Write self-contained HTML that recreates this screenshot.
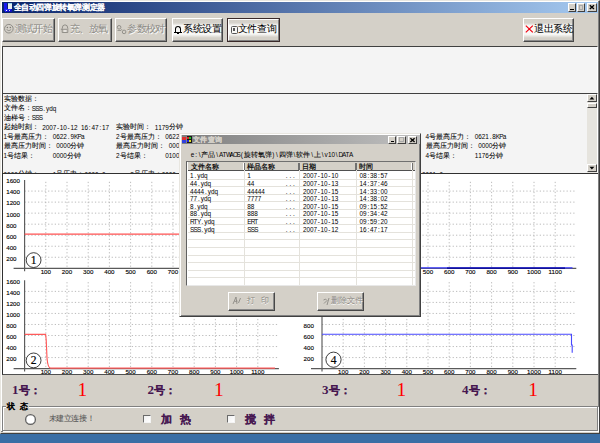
<!DOCTYPE html><html><head><meta charset="utf-8"><style>
*{margin:0;padding:0;box-sizing:border-box}
html,body{width:600px;height:443px;overflow:hidden;background:#3a6ea5;position:relative;font-family:"Liberation Sans",sans-serif}
div{position:absolute}
.st{white-space:nowrap;line-height:9.4px;height:9.4px}
.st i{display:inline-block;position:relative;top:0.4px;font-style:normal;width:3.516px;text-align:center;font-family:"Liberation Sans",sans-serif;font-size:6.4px}.st .k{font-size:7.03px;letter-spacing:0.03px;-webkit-text-stroke:0.08px}
.win{left:0;top:0;width:600px;height:433.6px;background:#d4d0c8;border-top:1px solid #e8e6e0;border-left:1px solid #e8e6e0;border-right:1px solid #404040;border-bottom:1px solid #404040}
.btn{background:#d4d0c8;border-top:1px solid #fff;border-left:1px solid #fff;border-right:1px solid #484848;border-bottom:1px solid #484848;box-shadow:inset -1px -1px 0 #8a8a8a}
.btxt{white-space:nowrap;font-size:9.4px;line-height:10px;-webkit-text-stroke:0.05px}
</style></head><body><div class="win"></div>
<div style="left:1px;top:1px;width:597px;height:1px;background:#fff"></div>
<div style="left:1px;top:1px;width:1px;height:431px;background:#fff"></div>
<div style="left:598px;top:1px;width:1px;height:431px;background:#808080"></div>
<div style="left:1px;top:431px;width:598px;height:1px;background:#808080"></div>
<div style="left:2px;top:2px;width:596px;height:10.6px;background:linear-gradient(90deg,#0a246a,#a6caf0)"></div>
<div style="left:4.2px;top:3.2px;width:2.4px;height:8.3px;background:#1818f0"></div>
<div style="left:7.6px;top:3.2px;width:4.4px;height:7px;background:linear-gradient(#90d8f0 0 18%,#e8ecec 18%)"></div>
<div style="left:4.5px;top:8.5px;width:7px;height:3px;background:linear-gradient(160deg,#2a2aff 0 50%,#1010c0 50%)"></div>
<div style="left:5.6px;top:10px;width:1.4px;height:1.4px;background:#fff"></div><div style="left:9px;top:10px;width:1.4px;height:1.4px;background:#cde"></div>
<div class="btxt" style="left:13.5px;top:2.5px;color:#fff;font-weight:bold;font-size:7.6px;line-height:10.3px;letter-spacing:-0.4px">全自动四弹旋转氧弹测定器</div>
<div style="left:567.5px;top:3.3px;width:8.3px;height:8.4px;background:#d4d0c8;border-top:1px solid #fff;border-left:1px solid #fff;border-right:1px solid #404040;border-bottom:1px solid #404040"></div>
<div style="left:570.0px;top:8.5px;width:3.5px;height:1.2px;background:#000"></div>
<div style="left:576.5px;top:3.3px;width:8.5px;height:8.4px;background:#d4d0c8;border-top:1px solid #fff;border-left:1px solid #fff;border-right:1px solid #404040;border-bottom:1px solid #404040"></div>
<div style="left:578.5px;top:5.1px;width:4.5px;height:4.5px;border:0.8px solid #a8a8a8;border-top-width:1.2px"></div>
<div style="left:586.5px;top:3.3px;width:10px;height:8.4px;background:#d4d0c8;border-top:1px solid #fff;border-left:1px solid #fff;border-right:1px solid #404040;border-bottom:1px solid #404040"></div>
<svg style="position:absolute;left:586.5px;top:3.3px" width="10" height="8.4" viewBox="0 0 10 8.4"><path d="M2.80 2.30L7.00 6.10M7.00 2.30L2.80 6.10" stroke="#000" stroke-width="1.3"/></svg>
<div class="btn" style="left:2px;top:18.2px;width:53px;height:23.500000000000004px"></div>
<div class="btxt" style="left:14.6px;top:24.4px;color:#8e8c86;font-size:10.1px;letter-spacing:-0.6px;text-shadow:0.6px 0.6px 0 #fff">测试开始</div>
<svg style="position:absolute;left:3px;top:23px" width="12" height="12" viewBox="0 0 12 12"><circle cx="5.85" cy="5.7" r="4.3" fill="none" stroke="#8e8c86" stroke-width="1"/><circle cx="4.4" cy="4.4" r="0.75" fill="#7a7872"/><circle cx="7.3" cy="4.4" r="0.75" fill="#7a7872"/><path d="M3.6 6.6Q5.85 8.8 8.1 6.6" fill="none" stroke="#8e8c86" stroke-width="0.9"/></svg>
<div class="btn" style="left:58px;top:18.2px;width:53.5px;height:23.500000000000004px"></div>
<div class="btxt" style="left:69.5px;top:24.4px;color:#8e8c86;font-size:10.1px;letter-spacing:-0.5px;text-shadow:0.6px 0.6px 0 #fff">充、放氧</div>
<svg style="position:absolute;left:60px;top:23px" width="10" height="12" viewBox="0 0 10 12"><path d="M2.2 9.5L2.2 5.5Q2.2 1.8 5 1.8Q7.8 1.8 7.8 5.5L7.8 9.5Z" fill="none" stroke="#8e8c86" stroke-width="0.95"/><path d="M0.8 6.3L7 6.3" stroke="#8e8c86" stroke-width="0.9"/><path d="M4 8L6 8" stroke="#fff" stroke-width="0.8"/></svg>
<div class="btn" style="left:115px;top:18.2px;width:52px;height:23.500000000000004px"></div>
<div class="btxt" style="left:127.3px;top:24.4px;color:#8e8c86;font-size:10.1px;letter-spacing:-0.6px;text-shadow:0.6px 0.6px 0 #fff">参数校对</div>
<svg style="position:absolute;left:116px;top:24px" width="12" height="11" viewBox="0 0 12 11"><circle cx="3.1" cy="3.3" r="1.8" fill="none" stroke="#8e8c86" stroke-width="0.95"/><circle cx="8.1" cy="7.9" r="1.8" fill="none" stroke="#8e8c86" stroke-width="0.95"/><path d="M1.5 6.5L5 6.5L6 5" fill="none" stroke="#8e8c86" stroke-width="0.8"/></svg>
<div class="btn" style="left:171.7px;top:18.2px;width:51.10000000000002px;height:23.500000000000004px;background:linear-gradient(#d4d0c8 0%,#d6d3cc 18%,#f8f8f6 30%,#f8f8f6 70%,#d4d0c8 86%)"></div>
<div class="btxt" style="left:183.3px;top:24.4px;color:#000;font-size:10.1px;letter-spacing:-0.45px">系统设置</div>
<div style="left:175px;top:26px;width:6px;height:6px;border:1.3px solid #000;border-bottom:none;border-radius:3px 3px 0 0"></div><div style="left:174px;top:31.5px;width:8px;height:1.3px;background:#000"></div><div style="left:177.2px;top:33px;width:1.6px;height:1.2px;background:#000"></div>
<div style="left:227px;top:18.2px;width:52.80000000000001px;height:23.500000000000004px;border:1px solid #3a2a2a;background:#d4d0c8"></div>
<div style="left:228px;top:19.2px;width:50.80000000000001px;height:21.500000000000004px;border-top:1px solid #fff;border-left:1px solid #fff;border-right:1px solid #808080;border-bottom:1px solid #808080;background:linear-gradient(#d4d0c8 0%,#d6d3cc 14%,#f8f8f6 28%,#f8f8f6 70%,#d4d0c8 86%)"></div>
<div class="btxt" style="left:237.6px;top:24.4px;color:#000;font-size:10.1px;letter-spacing:-0.3px">文件查询</div>
<div style="left:231px;top:26px;width:6.5px;height:7.5px;border:1px solid #555;border-radius:1.5px"></div><div style="left:233.2px;top:28.3px;width:2px;height:3px;background:#555"></div>
<div class="btn" style="left:522.5px;top:18.2px;width:51.799999999999955px;height:23.500000000000004px;background:linear-gradient(#d4d0c8 0%,#d6d3cc 18%,#f8f8f6 30%,#f8f8f6 70%,#d4d0c8 86%)"></div>
<div class="btxt" style="left:534px;top:24.4px;color:#000;font-size:10.1px;letter-spacing:-0.45px">退出系统</div>
<svg style="position:absolute;left:524.8px;top:25px" width="8.6" height="8" viewBox="0 0 8.6 8"><path d="M0.8 0.6L7.8 7.4M7.8 0.6L0.8 7.4" stroke="#f00010" stroke-width="1.15"/></svg>
<div style="left:2px;top:45.8px;width:595.5px;height:47.5px;background:#f4f4f4;border-top:1px solid #404040;border-left:1px solid #404040;border-right:1px solid #fff"></div>
<div style="left:2px;top:92.8px;width:595.5px;height:80px;background:#f4f4f4;border-top:1px solid #404040;border-left:1px solid #404040;border-right:1px solid #fff;overflow:hidden"></div>
<div class="st " style="left:3.6px;top:91.0px;color:#000;"><span class="k">实验数据：</span></div>
<div class="st " style="left:3.6px;top:100.42px;color:#000;"><span class="k">文件名：</span><i>S</i><i>S</i><i>S</i><i>.</i><i>y</i><i>d</i><i>q</i></div>
<div class="st " style="left:3.6px;top:109.84px;color:#000;"><span class="k">油样号：</span><i>S</i><i>S</i><i>S</i></div>
<div class="st " style="left:3.6px;top:119.25999999999999px;color:#000;"><span class="k">起始时刻：</span></div>
<div class="st " style="left:42.276px;top:119.25999999999999px;color:#000;"><i>2</i><i>0</i><i>0</i><i>7</i><i>-</i><i>1</i><i>0</i><i>-</i><i>1</i><i>2</i><i>&#160;</i><i>1</i><i>6</i><i>:</i><i>4</i><i>7</i><i>:</i><i>1</i><i>7</i></div>
<div class="st " style="left:116.112px;top:119.25999999999999px;color:#000;"><span class="k">实验时间：</span></div>
<div class="st " style="left:154.78799999999998px;top:119.25999999999999px;color:#000;"><i>1</i><i>1</i><i>7</i><i>9</i><span class="k">分钟</span></div>
<div class="st " style="left:3.6px;top:128.68px;color:#000;"><i>1</i><span class="k">号最高压力：</span></div>
<div class="st " style="left:52.824000000000005px;top:128.68px;color:#000;"><i>0</i><i>6</i><i>2</i><i>2</i><i>.</i><i>9</i><i>K</i><i>P</i><i>a</i></div>
<div class="st " style="left:116.112px;top:128.68px;color:#000;"><i>2</i><span class="k">号最高压力：</span></div>
<div class="st " style="left:165.33599999999998px;top:128.68px;color:#000;"><i>0</i><i>6</i><i>2</i><i>2</i><i>.</i><i>9</i><i>K</i><i>P</i><i>a</i></div>
<div class="st " style="left:425.52000000000004px;top:128.68px;color:#000;"><i>4</i><span class="k">号最高压力：</span></div>
<div class="st " style="left:474.744px;top:128.68px;color:#000;"><i>0</i><i>6</i><i>2</i><i>1</i><i>.</i><i>8</i><i>K</i><i>P</i><i>a</i></div>
<div class="st " style="left:3.6px;top:138.1px;color:#000;"><span class="k">最高压力时间：</span></div>
<div class="st " style="left:56.34px;top:138.1px;color:#000;"><i>0</i><i>0</i><i>0</i><i>0</i><span class="k">分钟</span></div>
<div class="st " style="left:116.112px;top:138.1px;color:#000;"><span class="k">最高压力时间：</span></div>
<div class="st " style="left:168.852px;top:138.1px;color:#000;"><i>0</i><i>0</i><i>0</i><i>0</i><span class="k">分钟</span></div>
<div class="st " style="left:425.52000000000004px;top:138.1px;color:#000;"><span class="k">最高压力时间：</span></div>
<div class="st " style="left:478.26000000000005px;top:138.1px;color:#000;"><i>0</i><i>0</i><i>0</i><i>0</i><span class="k">分钟</span></div>
<div class="st " style="left:3.6px;top:147.51999999999998px;color:#000;"><i>1</i><span class="k">号结果：</span></div>
<div class="st " style="left:52.824000000000005px;top:147.51999999999998px;color:#000;"><i>0</i><i>0</i><i>0</i><i>0</i><span class="k">分钟</span></div>
<div class="st " style="left:116.112px;top:147.51999999999998px;color:#000;"><i>2</i><span class="k">号结果：</span></div>
<div class="st " style="left:165.33599999999998px;top:147.51999999999998px;color:#000;"><i>0</i><i>1</i><i>0</i><i>0</i><span class="k">分钟</span></div>
<div class="st " style="left:425.52000000000004px;top:147.51999999999998px;color:#000;"><i>4</i><span class="k">号结果：</span></div>
<div class="st " style="left:474.744px;top:147.51999999999998px;color:#000;"><i>1</i><i>1</i><i>7</i><i>6</i><span class="k">分钟</span></div>
<div style="left:3px;top:165px;width:583px;height:7.5px;overflow:hidden">
<div class="st " style="left:0.6px;top:1.3600000000000136px;color:#000;"><i>0</i><i>0</i><i>0</i><i>0</i><span class="k">分钟：</span></div>
<div class="st " style="left:49.824000000000005px;top:1.3600000000000136px;color:#000;"><i>1</i><span class="k">号压力：</span><i>0</i><i>0</i><i>0</i><i>0</i><i>.</i><i>0</i></div>
<div class="st " style="left:127.17599999999999px;top:1.3600000000000136px;color:#000;"><i>2</i><span class="k">号压力：</span><i>0</i><i>0</i><i>0</i><i>0</i><i>.</i><i>0</i></div>
<div class="st " style="left:204.528px;top:1.3600000000000136px;color:#000;"><i>3</i><span class="k">号压力：</span><i>0</i><i>0</i><i>0</i><i>0</i><i>.</i><i>0</i></div>
<div class="st " style="left:419.004px;top:1.3600000000000136px;color:#000;"><i>0</i><i>0</i><i>0</i><i>1</i><i>.</i><i>0</i></div>
</div>
<div style="left:587px;top:94px;width:10px;height:78.5px;background:#e6e4de"></div>
<div style="left:587px;top:94.2px;width:9.8px;height:8px;background:#d4d0c8;border-top:1px solid #fff;border-left:1px solid #fff;border-right:1px solid #404040;border-bottom:1px solid #404040"></div>
<svg style="position:absolute;left:587px;top:94.2px" width="9.8" height="8" viewBox="0 0 10 8"><path d="M2.5 5.5L5 2.8L7.5 5.5Z" fill="#000"/></svg>
<div style="left:587px;top:102.5px;width:9.8px;height:5px;background:#d4d0c8;border-top:1px solid #fff;border-left:1px solid #fff;border-right:1px solid #404040;border-bottom:1px solid #404040"></div>
<div style="left:587px;top:164.2px;width:9.8px;height:8px;background:#d4d0c8;border-top:1px solid #fff;border-left:1px solid #fff;border-right:1px solid #404040;border-bottom:1px solid #404040"></div>
<svg style="position:absolute;left:587px;top:164.2px" width="9.8" height="8" viewBox="0 0 10 8"><path d="M2.5 2.8L5 5.5L7.5 2.8Z" fill="#000"/></svg>
<div style="left:2px;top:172.5px;width:596px;height:202.5px;background:#fff;border-top:1.3px solid #303030;border-left:1px solid #303030;border-bottom:1px solid #505050"></div>
<svg style="position:absolute;left:0;top:0" width="600" height="443" viewBox="0 0 600 443"><style>.g{stroke:#ababab;stroke-width:0.8;stroke-dasharray:1.25 2.1}.ax{stroke:#5a5a5a;stroke-width:1.15}.yl{font-family:"Liberation Sans";font-size:6.2px;text-anchor:start;fill:#000;stroke:#000;stroke-width:0.12px}.xl{font-family:"Liberation Sans";font-size:6.2px;text-anchor:middle;fill:#000;stroke:#000;stroke-width:0.12px}.cl{font-family:"Liberation Serif";font-size:11.5px;text-anchor:middle;fill:#000;stroke:#000;stroke-width:0.2px}</style><line x1="24.6" y1="257.27" x2="278.90" y2="257.27" class="g"/><line x1="24.6" y1="246.24" x2="278.90" y2="246.24" class="g"/><line x1="24.6" y1="235.21" x2="278.90" y2="235.21" class="g"/><line x1="24.6" y1="224.18" x2="278.90" y2="224.18" class="g"/><line x1="24.6" y1="213.15" x2="278.90" y2="213.15" class="g"/><line x1="24.6" y1="202.12" x2="278.90" y2="202.12" class="g"/><line x1="24.6" y1="191.09" x2="278.90" y2="191.09" class="g"/><line x1="45.80" y1="181.80" x2="45.80" y2="268.30" class="g"/><line x1="67.00" y1="181.80" x2="67.00" y2="268.30" class="g"/><line x1="88.20" y1="181.80" x2="88.20" y2="268.30" class="g"/><line x1="109.40" y1="181.80" x2="109.40" y2="268.30" class="g"/><line x1="130.60" y1="181.80" x2="130.60" y2="268.30" class="g"/><line x1="151.80" y1="181.80" x2="151.80" y2="268.30" class="g"/><line x1="173.00" y1="181.80" x2="173.00" y2="268.30" class="g"/><line x1="194.20" y1="181.80" x2="194.20" y2="268.30" class="g"/><line x1="215.40" y1="181.80" x2="215.40" y2="268.30" class="g"/><line x1="236.60" y1="181.80" x2="236.60" y2="268.30" class="g"/><line x1="257.80" y1="181.80" x2="257.80" y2="268.30" class="g"/><line x1="24.6" y1="179.90" x2="24.6" y2="271.30" class="ax"/><line x1="13.60" y1="268.3" x2="278.90" y2="268.3" class="ax"/><text x="6.20" y="260.62" class="yl">200</text><text x="6.20" y="249.59" class="yl">400</text><text x="6.20" y="238.56" class="yl">600</text><text x="6.20" y="227.53" class="yl">800</text><text x="6.20" y="216.50" class="yl">1000</text><text x="6.20" y="205.47" class="yl">1200</text><text x="6.20" y="194.44" class="yl">1400</text><text x="6.20" y="183.41" class="yl">1600</text><text x="45.80" y="273.90" class="xl">100</text><text x="67.00" y="273.90" class="xl">200</text><text x="88.20" y="273.90" class="xl">300</text><text x="109.40" y="273.90" class="xl">400</text><text x="130.60" y="273.90" class="xl">500</text><text x="151.80" y="273.90" class="xl">600</text><text x="173.00" y="273.90" class="xl">700</text><text x="194.20" y="273.90" class="xl">800</text><text x="215.40" y="273.90" class="xl">900</text><text x="236.60" y="273.90" class="xl">1000</text><text x="257.80" y="273.90" class="xl">1100</text><circle cx="33.60" cy="260.10" r="7.4" fill="#fff" stroke="#000" stroke-width="0.75"/><text x="33.60" y="264.00" class="cl">1</text><line x1="24.6" y1="357.57" x2="278.90" y2="357.57" class="g"/><line x1="24.6" y1="346.54" x2="278.90" y2="346.54" class="g"/><line x1="24.6" y1="335.51" x2="278.90" y2="335.51" class="g"/><line x1="24.6" y1="324.48" x2="278.90" y2="324.48" class="g"/><line x1="24.6" y1="313.45" x2="278.90" y2="313.45" class="g"/><line x1="24.6" y1="302.42" x2="278.90" y2="302.42" class="g"/><line x1="24.6" y1="291.39" x2="278.90" y2="291.39" class="g"/><line x1="45.80" y1="282.10" x2="45.80" y2="368.60" class="g"/><line x1="67.00" y1="282.10" x2="67.00" y2="368.60" class="g"/><line x1="88.20" y1="282.10" x2="88.20" y2="368.60" class="g"/><line x1="109.40" y1="282.10" x2="109.40" y2="368.60" class="g"/><line x1="130.60" y1="282.10" x2="130.60" y2="368.60" class="g"/><line x1="151.80" y1="282.10" x2="151.80" y2="368.60" class="g"/><line x1="173.00" y1="282.10" x2="173.00" y2="368.60" class="g"/><line x1="194.20" y1="282.10" x2="194.20" y2="368.60" class="g"/><line x1="215.40" y1="282.10" x2="215.40" y2="368.60" class="g"/><line x1="236.60" y1="282.10" x2="236.60" y2="368.60" class="g"/><line x1="257.80" y1="282.10" x2="257.80" y2="368.60" class="g"/><line x1="24.6" y1="280.20" x2="24.6" y2="371.60" class="ax"/><line x1="13.60" y1="368.6" x2="278.90" y2="368.6" class="ax"/><text x="6.20" y="360.92" class="yl">200</text><text x="6.20" y="349.89" class="yl">400</text><text x="6.20" y="338.86" class="yl">600</text><text x="6.20" y="327.83" class="yl">800</text><text x="6.20" y="316.80" class="yl">1000</text><text x="6.20" y="305.77" class="yl">1200</text><text x="6.20" y="294.74" class="yl">1400</text><text x="6.20" y="283.71" class="yl">1600</text><text x="45.80" y="374.20" class="xl">100</text><text x="67.00" y="374.20" class="xl">200</text><text x="88.20" y="374.20" class="xl">300</text><text x="109.40" y="374.20" class="xl">400</text><text x="130.60" y="374.20" class="xl">500</text><text x="151.80" y="374.20" class="xl">600</text><text x="173.00" y="374.20" class="xl">700</text><text x="194.20" y="374.20" class="xl">800</text><text x="215.40" y="374.20" class="xl">900</text><text x="236.60" y="374.20" class="xl">1000</text><text x="257.80" y="374.20" class="xl">1100</text><circle cx="33.60" cy="360.40" r="7.4" fill="#fff" stroke="#000" stroke-width="0.75"/><text x="33.60" y="364.30" class="cl">2</text><line x1="322" y1="257.27" x2="576.30" y2="257.27" class="g"/><line x1="322" y1="246.24" x2="576.30" y2="246.24" class="g"/><line x1="322" y1="235.21" x2="576.30" y2="235.21" class="g"/><line x1="322" y1="224.18" x2="576.30" y2="224.18" class="g"/><line x1="322" y1="213.15" x2="576.30" y2="213.15" class="g"/><line x1="322" y1="202.12" x2="576.30" y2="202.12" class="g"/><line x1="322" y1="191.09" x2="576.30" y2="191.09" class="g"/><line x1="343.20" y1="181.80" x2="343.20" y2="268.30" class="g"/><line x1="364.40" y1="181.80" x2="364.40" y2="268.30" class="g"/><line x1="385.60" y1="181.80" x2="385.60" y2="268.30" class="g"/><line x1="406.80" y1="181.80" x2="406.80" y2="268.30" class="g"/><line x1="428.00" y1="181.80" x2="428.00" y2="268.30" class="g"/><line x1="449.20" y1="181.80" x2="449.20" y2="268.30" class="g"/><line x1="470.40" y1="181.80" x2="470.40" y2="268.30" class="g"/><line x1="491.60" y1="181.80" x2="491.60" y2="268.30" class="g"/><line x1="512.80" y1="181.80" x2="512.80" y2="268.30" class="g"/><line x1="534.00" y1="181.80" x2="534.00" y2="268.30" class="g"/><line x1="555.20" y1="181.80" x2="555.20" y2="268.30" class="g"/><line x1="322" y1="179.90" x2="322" y2="271.30" class="ax"/><line x1="311.00" y1="268.3" x2="576.30" y2="268.3" class="ax"/><text x="303.60" y="260.62" class="yl">200</text><text x="303.60" y="249.59" class="yl">400</text><text x="303.60" y="238.56" class="yl">600</text><text x="303.60" y="227.53" class="yl">800</text><text x="303.60" y="216.50" class="yl">1000</text><text x="303.60" y="205.47" class="yl">1200</text><text x="303.60" y="194.44" class="yl">1400</text><text x="303.60" y="183.41" class="yl">1600</text><text x="343.20" y="273.90" class="xl">100</text><text x="364.40" y="273.90" class="xl">200</text><text x="385.60" y="273.90" class="xl">300</text><text x="406.80" y="273.90" class="xl">400</text><text x="428.00" y="273.90" class="xl">500</text><text x="449.20" y="273.90" class="xl">600</text><text x="470.40" y="273.90" class="xl">700</text><text x="491.60" y="273.90" class="xl">800</text><text x="512.80" y="273.90" class="xl">900</text><text x="534.00" y="273.90" class="xl">1000</text><text x="555.20" y="273.90" class="xl">1100</text><circle cx="331.00" cy="260.10" r="7.4" fill="#fff" stroke="#000" stroke-width="0.75"/><text x="331.00" y="264.00" class="cl">3</text><line x1="322" y1="357.57" x2="576.30" y2="357.57" class="g"/><line x1="322" y1="346.54" x2="576.30" y2="346.54" class="g"/><line x1="322" y1="335.51" x2="576.30" y2="335.51" class="g"/><line x1="322" y1="324.48" x2="576.30" y2="324.48" class="g"/><line x1="322" y1="313.45" x2="576.30" y2="313.45" class="g"/><line x1="322" y1="302.42" x2="576.30" y2="302.42" class="g"/><line x1="322" y1="291.39" x2="576.30" y2="291.39" class="g"/><line x1="343.20" y1="282.10" x2="343.20" y2="368.60" class="g"/><line x1="364.40" y1="282.10" x2="364.40" y2="368.60" class="g"/><line x1="385.60" y1="282.10" x2="385.60" y2="368.60" class="g"/><line x1="406.80" y1="282.10" x2="406.80" y2="368.60" class="g"/><line x1="428.00" y1="282.10" x2="428.00" y2="368.60" class="g"/><line x1="449.20" y1="282.10" x2="449.20" y2="368.60" class="g"/><line x1="470.40" y1="282.10" x2="470.40" y2="368.60" class="g"/><line x1="491.60" y1="282.10" x2="491.60" y2="368.60" class="g"/><line x1="512.80" y1="282.10" x2="512.80" y2="368.60" class="g"/><line x1="534.00" y1="282.10" x2="534.00" y2="368.60" class="g"/><line x1="555.20" y1="282.10" x2="555.20" y2="368.60" class="g"/><line x1="322" y1="280.20" x2="322" y2="371.60" class="ax"/><line x1="311.00" y1="368.6" x2="576.30" y2="368.6" class="ax"/><text x="303.60" y="360.92" class="yl">200</text><text x="303.60" y="349.89" class="yl">400</text><text x="303.60" y="338.86" class="yl">600</text><text x="303.60" y="327.83" class="yl">800</text><text x="303.60" y="316.80" class="yl">1000</text><text x="303.60" y="305.77" class="yl">1200</text><text x="303.60" y="294.74" class="yl">1400</text><text x="303.60" y="283.71" class="yl">1600</text><text x="343.20" y="374.20" class="xl">100</text><text x="364.40" y="374.20" class="xl">200</text><text x="385.60" y="374.20" class="xl">300</text><text x="406.80" y="374.20" class="xl">400</text><text x="428.00" y="374.20" class="xl">500</text><text x="449.20" y="374.20" class="xl">600</text><text x="470.40" y="374.20" class="xl">700</text><text x="491.60" y="374.20" class="xl">800</text><text x="512.80" y="374.20" class="xl">900</text><text x="534.00" y="374.20" class="xl">1000</text><text x="555.20" y="374.20" class="xl">1100</text><circle cx="333.50" cy="359.70" r="7.6" fill="#fff" stroke="#000" stroke-width="0.75"/><text x="333.50" y="363.60" class="cl">4</text><line x1="24.6" y1="234.00" x2="278" y2="234.00" stroke="#ff5050" stroke-width="1.25"/><path d="M24.6 334.30 L45.6 334.30 L46.2 340 L47 358 C47.6 365 48.5 368 50.5 368.1 L275 368.1" fill="none" stroke="#ff5a5a" stroke-width="1.15"/><line x1="322" y1="267.8" x2="572.5" y2="267.8" stroke="#3838ff" stroke-width="1.3"/><line x1="447" y1="268.1" x2="565" y2="268.1" stroke="#000090" stroke-width="1.4"/><path d="M322 334.30 L571.5 334.30 L571.5 345 L572.2 345 L572.2 352.7" fill="none" stroke="#4848ff" stroke-width="1.1"/></svg>
<div style="left:12px;top:381.5px;white-space:nowrap;color:#461650;line-height:14px;height:14px"><span style="display:inline-block;width:6.6px;font-family:'Liberation Serif',serif;font-weight:bold;font-size:13px">1</span><span style="font-weight:bold;font-size:10.95px;-webkit-text-stroke:0.1px">号：</span></div>
<div style="left:77.5px;top:379.6px;color:#f00;font-family:'Liberation Serif',serif;font-size:19.5px;line-height:20px;white-space:nowrap">1</div>
<div style="left:147.5px;top:381.5px;white-space:nowrap;color:#461650;line-height:14px;height:14px"><span style="display:inline-block;width:6.6px;font-family:'Liberation Serif',serif;font-weight:bold;font-size:13px">2</span><span style="font-weight:bold;font-size:10.95px;-webkit-text-stroke:0.1px">号：</span></div>
<div style="left:214px;top:379.6px;color:#f00;font-family:'Liberation Serif',serif;font-size:19.5px;line-height:20px;white-space:nowrap">1</div>
<div style="left:322px;top:381.5px;white-space:nowrap;color:#461650;line-height:14px;height:14px"><span style="display:inline-block;width:6.6px;font-family:'Liberation Serif',serif;font-weight:bold;font-size:13px">3</span><span style="font-weight:bold;font-size:10.95px;-webkit-text-stroke:0.1px">号：</span></div>
<div style="left:396.5px;top:379.6px;color:#f00;font-family:'Liberation Serif',serif;font-size:19.5px;line-height:20px;white-space:nowrap">1</div>
<div style="left:462px;top:381.5px;white-space:nowrap;color:#461650;line-height:14px;height:14px"><span style="display:inline-block;width:6.6px;font-family:'Liberation Serif',serif;font-weight:bold;font-size:13px">4</span><span style="font-weight:bold;font-size:10.95px;-webkit-text-stroke:0.1px">号：</span></div>
<div style="left:528.3px;top:379.6px;color:#f00;font-family:'Liberation Serif',serif;font-size:19.5px;line-height:20px;white-space:nowrap">1</div>
<div style="left:2.3px;top:406.3px;width:595.5px;height:24.3px;border:1px solid #808080;box-shadow:inset 1px 1px 0 #fff,1px 1px 0 #fff"></div>
<div class="btxt" style="left:6.3px;top:401.3px;padding:0 1px 0 1.2px;background:#d4d0c8;font-weight:bold;font-size:8.3px;line-height:10px;color:#000;letter-spacing:4.3px">状<span style="letter-spacing:0">态</span></div>
<div style="left:25px;top:414.3px;width:11px;height:10.5px;border-radius:50%;background:#fff;border:1px solid #606060;box-shadow:inset 0 0 0 0.5px #999"></div>
<div class="btxt" style="left:48.5px;top:414px;color:#555;font-size:7.6px;line-height:10px;letter-spacing:-0.4px">未建立连接！</div>
<div style="left:143px;top:415.3px;width:8px;height:8.2px;background:linear-gradient(135deg,#f0f0f0,#fff);border-top:1.5px solid #6a6a6a;border-left:1.5px solid #6a6a6a;border-right:1px solid #f4f4f4;border-bottom:1px solid #f4f4f4"></div>
<div class="btxt" style="left:161.3px;top:412.8px;color:#461650;font-weight:bold;font-size:10.95px;line-height:12px;-webkit-text-stroke:0.1px">加</div>
<div class="btxt" style="left:179.5px;top:412.8px;color:#461650;font-weight:bold;font-size:10.95px;line-height:12px;-webkit-text-stroke:0.1px">热</div>
<div style="left:227.2px;top:415.3px;width:8px;height:8.2px;background:linear-gradient(135deg,#f0f0f0,#fff);border-top:1.5px solid #6a6a6a;border-left:1.5px solid #6a6a6a;border-right:1px solid #f4f4f4;border-bottom:1px solid #f4f4f4"></div>
<div class="btxt" style="left:245.3px;top:412.8px;color:#461650;font-weight:bold;font-size:10.95px;line-height:12px;-webkit-text-stroke:0.1px">搅</div>
<div class="btxt" style="left:263.5px;top:412.8px;color:#461650;font-weight:bold;font-size:10.95px;line-height:12px;-webkit-text-stroke:0.1px">拌</div>
<div style="left:179.3px;top:132.6px;width:241.5px;height:184.6px;background:#d4d0c8;border-top:1px solid #e8e6e0;border-left:1px solid #e8e6e0;border-right:1.3px solid #404040;border-bottom:1.3px solid #404040;box-shadow:inset 1px 1px 0 #fff,inset -1px -1px 0 #808080"></div>
<div style="left:181.5px;top:135.3px;width:238px;height:9.2px;background:linear-gradient(90deg,#808080,#c0c0c0)"></div>
<div style="left:182.2px;top:137px;width:3.6px;height:5.5px;background:linear-gradient(#e03030 0 45%,#3040e0 45%)"></div>
<div style="left:186.5px;top:136.4px;width:5.4px;height:6.4px;background:#181818"></div>
<div style="left:187.1px;top:137px;width:2px;height:2.4px;background:#e02020"></div><div style="left:189.3px;top:137px;width:2px;height:2.4px;background:#20c020"></div>
<div style="left:187.1px;top:139.8px;width:2px;height:2.4px;background:#2020e0"></div><div style="left:189.3px;top:139.8px;width:2px;height:2.4px;background:#e0e020"></div>
<div class="btxt" style="left:193px;top:135.3px;color:#d4d0c8;font-weight:bold;font-size:7.4px;line-height:9.2px;letter-spacing:0.4px;-webkit-text-stroke:0.15px #d4d0c8">文件查询</div>
<div style="left:388px;top:135.6px;width:8.3px;height:8.2px;background:#d4d0c8;border-top:1px solid #fff;border-left:1px solid #fff;border-right:1px solid #404040;border-bottom:1px solid #404040"></div>
<div style="left:390.5px;top:140.6px;width:3.5px;height:1.2px;background:#000"></div>
<div style="left:397.3px;top:135.6px;width:8.5px;height:8.2px;background:#d4d0c8;border-top:1px solid #fff;border-left:1px solid #fff;border-right:1px solid #404040;border-bottom:1px solid #404040"></div>
<div style="left:399.3px;top:137.4px;width:4.5px;height:4.5px;border:0.8px solid #a8a8a8;border-top-width:1.2px"></div>
<div style="left:407.6px;top:135.6px;width:9.2px;height:8.2px;background:#d4d0c8;border-top:1px solid #fff;border-left:1px solid #fff;border-right:1px solid #404040;border-bottom:1px solid #404040"></div>
<svg style="position:absolute;left:407.6px;top:135.6px" width="9.2" height="8.2" viewBox="0 0 9.2 8.2"><path d="M2.40 2.20L6.60 6.00M6.60 2.20L2.40 6.00" stroke="#000" stroke-width="1.3"/></svg>
<div class="st " style="left:190.8px;top:146.6px;color:#000;"><i>e</i><i>:</i><i>\</i><span class="k">产品</span><i>\</i><i>A</i><i>T</i><i>W</i><i>A</i><i>O</i><i>S</i><i>(</i><span class="k">旋转氧弹</span><i>)</i><i>\</i><span class="k">四弹</span><i>\</i><span class="k">软件</span><i>\</i><span class="k">上</span><i>\</i><i>v</i><i>1</i><i>0</i><i>\</i><i>D</i><i>A</i><i>T</i><i>A</i></div>
<div style="left:186.4px;top:161px;width:229.20000000000002px;height:124.69999999999999px;background:#fff;border-top:1px solid #707070;border-left:1.5px solid #606060;border-right:1px solid #e8e8e8;border-bottom:1px solid #e8e8e8;overflow:hidden"></div>
<div style="left:187.70000000000002px;top:162px;width:226.9px;height:9.4px;background:#d4d0c8;border-bottom:1.2px solid #505050"></div>
<div style="left:243px;top:162.5px;width:1px;height:7.2px;background:#fff"></div>
<div style="left:243.8px;top:162.5px;width:1.3px;height:7.2px;background:#707070"></div>
<div class="btxt" style="left:190.7px;top:161.5px;font-size:7.03px;line-height:9px;color:#000;letter-spacing:0.03px;-webkit-text-stroke:0.2px">文件名称</div>
<div style="left:297.5px;top:162.5px;width:1px;height:7.2px;background:#fff"></div>
<div style="left:298.3px;top:162.5px;width:1.3px;height:7.2px;background:#707070"></div>
<div class="btxt" style="left:247px;top:161.5px;font-size:7.03px;line-height:9px;color:#000;letter-spacing:0.03px;-webkit-text-stroke:0.2px">样品名称</div>
<div style="left:354.6px;top:162.5px;width:1px;height:7.2px;background:#fff"></div>
<div style="left:355.40000000000003px;top:162.5px;width:1.3px;height:7.2px;background:#707070"></div>
<div class="btxt" style="left:301.5px;top:161.5px;font-size:7.03px;line-height:9px;color:#000;letter-spacing:0.03px;-webkit-text-stroke:0.2px">日期</div>
<div style="left:410.8px;top:162.5px;width:1px;height:7.2px;background:#fff"></div>
<div style="left:411.6px;top:162.5px;width:1.3px;height:7.2px;background:#707070"></div>
<div class="btxt" style="left:358.6px;top:161.5px;font-size:7.03px;line-height:9px;color:#000;letter-spacing:0.03px;-webkit-text-stroke:0.2px">时间</div>
<div style="left:187.70000000000002px;top:178.50px;width:226.9px;height:1px;background:#e4e2dc"></div>
<div style="left:187.70000000000002px;top:186.10px;width:226.9px;height:1px;background:#e4e2dc"></div>
<div style="left:187.70000000000002px;top:193.70px;width:226.9px;height:1px;background:#e4e2dc"></div>
<div style="left:187.70000000000002px;top:201.30px;width:226.9px;height:1px;background:#e4e2dc"></div>
<div style="left:187.70000000000002px;top:208.90px;width:226.9px;height:1px;background:#e4e2dc"></div>
<div style="left:187.70000000000002px;top:216.50px;width:226.9px;height:1px;background:#e4e2dc"></div>
<div style="left:187.70000000000002px;top:224.10px;width:226.9px;height:1px;background:#e4e2dc"></div>
<div style="left:187.70000000000002px;top:231.70px;width:226.9px;height:1px;background:#e4e2dc"></div>
<div style="left:187.70000000000002px;top:239.30px;width:226.9px;height:1px;background:#e4e2dc"></div>
<div style="left:187.70000000000002px;top:246.90px;width:226.9px;height:1px;background:#e4e2dc"></div>
<div style="left:187.70000000000002px;top:254.50px;width:226.9px;height:1px;background:#e4e2dc"></div>
<div style="left:187.70000000000002px;top:262.10px;width:226.9px;height:1px;background:#e4e2dc"></div>
<div style="left:187.70000000000002px;top:269.70px;width:226.9px;height:1px;background:#e4e2dc"></div>
<div style="left:187.70000000000002px;top:277.30px;width:226.9px;height:1px;background:#e4e2dc"></div>
<div style="left:244px;top:170.3px;width:1px;height:114.39999999999999px;background:#e4e2dc"></div>
<div style="left:298.5px;top:170.3px;width:1px;height:114.39999999999999px;background:#e4e2dc"></div>
<div style="left:355.6px;top:170.3px;width:1px;height:114.39999999999999px;background:#e4e2dc"></div>
<div style="left:411.8px;top:170.3px;width:1px;height:114.39999999999999px;background:#e4e2dc"></div>
<div class="st " style="left:190px;top:168.0px;color:#000;"><i>1</i><i>.</i><i>y</i><i>d</i><i>q</i></div>
<div class="st " style="left:247.3px;top:168.0px;color:#000;"><i>1</i></div>
<div class="st " style="left:285px;top:168.0px;color:#000;"><i>.</i><i>.</i><i>.</i></div>
<div class="st " style="left:303px;top:168.0px;color:#000;"><i>2</i><i>0</i><i>0</i><i>7</i><i>-</i><i>1</i><i>0</i><i>-</i><i>1</i><i>0</i></div>
<div class="st " style="left:359.5px;top:168.0px;color:#000;"><i>0</i><i>8</i><i>:</i><i>3</i><i>8</i><i>:</i><i>5</i><i>7</i></div>
<div class="st " style="left:190px;top:175.6px;color:#000;"><i>4</i><i>4</i><i>.</i><i>y</i><i>d</i><i>q</i></div>
<div class="st " style="left:247.3px;top:175.6px;color:#000;"><i>4</i><i>4</i></div>
<div class="st " style="left:285px;top:175.6px;color:#000;"><i>.</i><i>.</i><i>.</i></div>
<div class="st " style="left:303px;top:175.6px;color:#000;"><i>2</i><i>0</i><i>0</i><i>7</i><i>-</i><i>1</i><i>0</i><i>-</i><i>1</i><i>3</i></div>
<div class="st " style="left:359.5px;top:175.6px;color:#000;"><i>1</i><i>4</i><i>:</i><i>3</i><i>7</i><i>:</i><i>4</i><i>6</i></div>
<div class="st " style="left:190px;top:183.2px;color:#000;"><i>4</i><i>4</i><i>4</i><i>4</i><i>.</i><i>y</i><i>d</i><i>q</i></div>
<div class="st " style="left:247.3px;top:183.2px;color:#000;"><i>4</i><i>4</i><i>4</i><i>4</i><i>4</i></div>
<div class="st " style="left:285px;top:183.2px;color:#000;"><i>.</i><i>.</i><i>.</i></div>
<div class="st " style="left:303px;top:183.2px;color:#000;"><i>2</i><i>0</i><i>0</i><i>7</i><i>-</i><i>1</i><i>0</i><i>-</i><i>1</i><i>5</i></div>
<div class="st " style="left:359.5px;top:183.2px;color:#000;"><i>1</i><i>4</i><i>:</i><i>3</i><i>3</i><i>:</i><i>0</i><i>0</i></div>
<div class="st " style="left:190px;top:190.79999999999998px;color:#000;"><i>7</i><i>7</i><i>.</i><i>y</i><i>d</i><i>q</i></div>
<div class="st " style="left:247.3px;top:190.79999999999998px;color:#000;"><i>7</i><i>7</i><i>7</i><i>7</i></div>
<div class="st " style="left:285px;top:190.79999999999998px;color:#000;"><i>.</i><i>.</i><i>.</i></div>
<div class="st " style="left:303px;top:190.79999999999998px;color:#000;"><i>2</i><i>0</i><i>0</i><i>7</i><i>-</i><i>1</i><i>0</i><i>-</i><i>1</i><i>3</i></div>
<div class="st " style="left:359.5px;top:190.79999999999998px;color:#000;"><i>1</i><i>4</i><i>:</i><i>3</i><i>8</i><i>:</i><i>0</i><i>2</i></div>
<div class="st " style="left:190px;top:198.4px;color:#000;"><i>8</i><i>.</i><i>y</i><i>d</i><i>q</i></div>
<div class="st " style="left:247.3px;top:198.4px;color:#000;"><i>8</i><i>8</i></div>
<div class="st " style="left:285px;top:198.4px;color:#000;"><i>.</i><i>.</i><i>.</i></div>
<div class="st " style="left:303px;top:198.4px;color:#000;"><i>2</i><i>0</i><i>0</i><i>7</i><i>-</i><i>1</i><i>0</i><i>-</i><i>1</i><i>5</i></div>
<div class="st " style="left:359.5px;top:198.4px;color:#000;"><i>0</i><i>9</i><i>:</i><i>1</i><i>5</i><i>:</i><i>5</i><i>2</i></div>
<div class="st " style="left:190px;top:206.0px;color:#000;"><i>8</i><i>8</i><i>.</i><i>y</i><i>d</i><i>q</i></div>
<div class="st " style="left:247.3px;top:206.0px;color:#000;"><i>8</i><i>8</i><i>8</i></div>
<div class="st " style="left:285px;top:206.0px;color:#000;"><i>.</i><i>.</i><i>.</i></div>
<div class="st " style="left:303px;top:206.0px;color:#000;"><i>2</i><i>0</i><i>0</i><i>7</i><i>-</i><i>1</i><i>0</i><i>-</i><i>1</i><i>5</i></div>
<div class="st " style="left:359.5px;top:206.0px;color:#000;"><i>0</i><i>9</i><i>:</i><i>3</i><i>4</i><i>:</i><i>4</i><i>2</i></div>
<div class="st " style="left:190px;top:213.6px;color:#000;"><i>R</i><i>T</i><i>Y</i><i>.</i><i>y</i><i>d</i><i>q</i></div>
<div class="st " style="left:247.3px;top:213.6px;color:#000;"><i>E</i><i>R</i><i>T</i></div>
<div class="st " style="left:285px;top:213.6px;color:#000;"><i>.</i><i>.</i><i>.</i></div>
<div class="st " style="left:303px;top:213.6px;color:#000;"><i>2</i><i>0</i><i>0</i><i>7</i><i>-</i><i>1</i><i>0</i><i>-</i><i>1</i><i>5</i></div>
<div class="st " style="left:359.5px;top:213.6px;color:#000;"><i>0</i><i>9</i><i>:</i><i>5</i><i>9</i><i>:</i><i>2</i><i>0</i></div>
<div class="st " style="left:190px;top:221.2px;color:#000;"><i>S</i><i>S</i><i>S</i><i>.</i><i>y</i><i>d</i><i>q</i></div>
<div class="st " style="left:247.3px;top:221.2px;color:#000;"><i>S</i><i>S</i><i>S</i></div>
<div class="st " style="left:285px;top:221.2px;color:#000;"><i>.</i><i>.</i><i>.</i></div>
<div class="st " style="left:303px;top:221.2px;color:#000;"><i>2</i><i>0</i><i>0</i><i>7</i><i>-</i><i>1</i><i>0</i><i>-</i><i>1</i><i>2</i></div>
<div class="st " style="left:359.5px;top:221.2px;color:#000;"><i>1</i><i>6</i><i>:</i><i>4</i><i>7</i><i>:</i><i>1</i><i>7</i></div>
<div class="btn" style="left:228px;top:291.6px;width:46.5px;height:19.19999999999999px"></div>
<div class="btxt" style="left:246.8px;top:296.40000000000003px;color:#8c8a84;font-size:7.6px;line-height:9px;text-shadow:0.5px 0.5px 0 #fff">打<span style="display:inline-block;width:5.8px"></span>印</div>
<svg style="position:absolute;left:232px;top:296px" width="9" height="9" viewBox="0 0 9 9"><path d="M1 8L4 1L5 8M2.5 5.5L5.5 5M6.5 7L8.5 2" stroke="#8c8a84" stroke-width="0.9" fill="none"/></svg>
<div class="btn" style="left:317px;top:291.6px;width:47.39999999999998px;height:19.19999999999999px"></div>
<div class="btxt" style="left:330.6px;top:296.40000000000003px;color:#8c8a84;font-size:7.6px;line-height:9px;text-shadow:0.5px 0.5px 0 #fff">删除文件</div>
<svg style="position:absolute;left:321.5px;top:296px" width="9" height="10" viewBox="0 0 9 10"><path d="M1.5 4Q4 2 5 4.5L2 7.5M7 2L5 9" stroke="#8c8a84" stroke-width="0.9" fill="none"/></svg></body></html>
